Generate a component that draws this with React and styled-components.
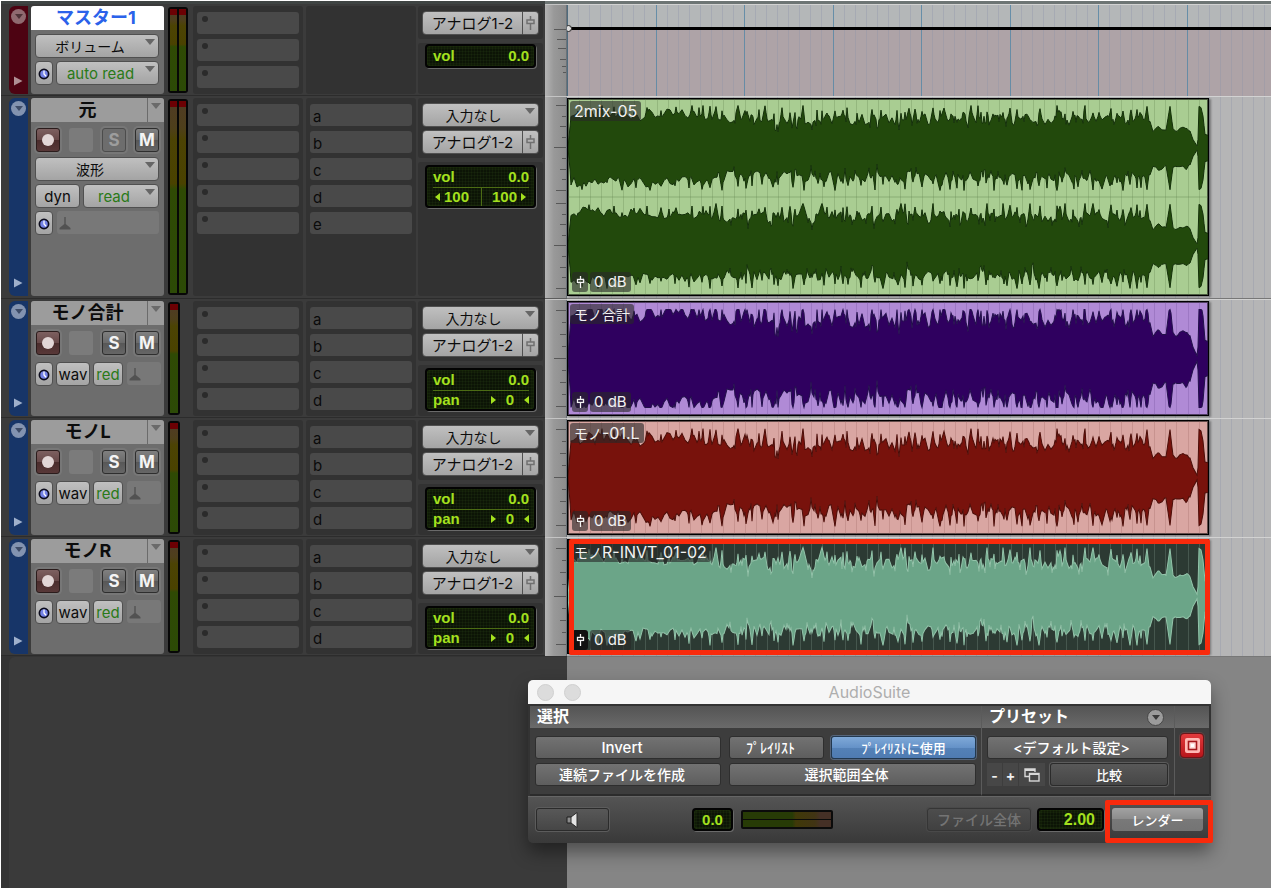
import React from 'react'
import styled, { createGlobalStyle, css } from 'styled-components'

const UI_FONT = 'Inter, "Noto Sans CJK JP", sans-serif'
const LED_FONT = '"Liberation Sans", "Noto Sans CJK JP", sans-serif'

const BAR_WIDTH = 88.5
const CLIP_WIDTH = 640

// peak positions along the clip, upper and lower side of the waveform
const UPPER_PEAKS = [
    10, 21, 34, 46, 54, 66, 79, 93, 101, 108, 124, 131, 135, 142, 148, 154, 170, 178, 184, 191, 197, 206, 214,
    222, 227, 235, 249, 254, 259, 267, 275, 279, 289, 304, 313, 329, 333, 337, 341, 347, 354, 365, 372, 376,
    383, 391, 396, 403, 410, 413, 419, 426, 435, 442, 449, 462, 472, 489, 492, 497, 505, 517, 525, 531, 543,
    549, 555, 563, 569, 572, 579, 602
]

const LOWER_PEAKS = [
    14, 22, 30, 39, 47, 54, 68, 82, 93, 107, 121, 134, 142, 154, 170, 178, 184, 194, 206, 210, 225, 236, 250,
    256, 267, 275, 280, 293, 307, 315, 330, 337, 345, 354, 365, 372, 382, 374, 389, 396, 399, 410, 418, 426,
    436, 439, 449, 454, 462, 471, 479, 489, 494, 506, 510, 517, 525, 534, 543, 549, 555, 562, 569, 573, 579,
    602
]

const TRACKS = [
    {
        id: 'master', name: 'マスター1', kind: 'master', height: 92, tone: 'red', slots: 3, sends: [], meters: 2,
    },
    {
        id: 'src', name: '元', kind: 'stereo', height: 203, tone: 'blue', slots: 5, sends: ['a', 'b', 'c', 'd', 'e'], meters: 2,
        clip: { kana: '', label: '2mix-05', back: '#a9cd92', wave: '#22490c', edge: '#14300a', grid: '#5d7f4a', gain: 1, channels: 2 },
    },
    {
        id: 'sum', name: 'モノ合計', kind: 'mono', height: 119, tone: 'blue', slots: 4, sends: ['a', 'b', 'c', 'd'], meters: 1,
        clip: { kana: 'モノ合計', label: '', back: '#b08ad6', wave: '#2f005f', edge: '#22104a', grid: '#6a4a92', gain: 1.16, channels: 1 },
    },
    {
        id: 'left', name: 'モノL', kind: 'mono', height: 119, tone: 'blue', slots: 4, sends: ['a', 'b', 'c', 'd'], meters: 1,
        clip: { kana: 'モノ', label: '-01.L', back: '#d9a6a2', wave: '#78120c', edge: '#4a0d08', grid: '#96605c', gain: 1, channels: 1 },
    },
    {
        id: 'right', name: 'モノR', kind: 'mono', height: 119, tone: 'blue', slots: 4, sends: ['a', 'b', 'c', 'd'], meters: 1,
        clip: { kana: 'モノ', label: 'R-INVT_01-02', back: '#2c3a33', wave: '#6ba588', edge: '#93c4aa', grid: '#8ba598', gain: 1, channels: 1, marked: true },
    },
]

const hash = (n) => {
    const v = Math.sin(n * 12.9898) * 43758.5453
    return v - Math.floor(v)
}

const noise = (x, seed) => {
    const k = Math.floor(x / 3)
    const t = x / 3 - k
    return hash(k + seed) * (1 - t) + hash(k + 1 + seed) * t
}

const TAIL = [
    [575, 0.66], [582, 0.6], [585, 0.42], [590, 0.5], [598, 0.41], [602, 0.5], [607, 0.4], [612, 0.43], [619, 0.47],
    [622, 0.4], [625, 0.2], [629, 0.05], [630, 0.2], [631, 0.98], [633, 0.95], [635, 0.75], [637, 0.32], [640, 0.3]
]

const bodyLevel = (x, seed) => {
    if (x < 575) {
        const floor = x < 150 ? 0.64 : 0.53
        return Math.min(floor + noise(x, seed) * 0.28, x < 3 ? x * 0.25 : 1)
    }
    const i = TAIL.findIndex((p) => p[0] >= x)
    const [x2, y2] = TAIL[i]
    const [x1, y1] = TAIL[i - 1] || TAIL[i]
    const t = x2 === x1 ? 0 : (x - x1) / (x2 - x1)
    return y1 + (y2 - y1) * t + (noise(x, seed) - 0.5) * (x < 622 ? 0.09 : 0)
}

const level = (x, peaks, seed) => {
    let v = bodyLevel(x, seed)
    peaks.forEach((p) => {
        const low = p < 60 ? 0.76 : 0.8
        const top = p > 575 ? 0.98 : low + hash(p * 3 + seed) * (1.03 - low)
        const slope = p > 575 ? 0.14 : 0.06 + hash(p + seed * 2) * 0.16
        v = Math.max(v, top - Math.abs(x - p) * slope * (x > p ? 1.3 : 1))
    })
    // sharp notches between the transients
    if (x > 140 && x < 575 && hash(x * 7 + seed) > 0.9) v -= 0.16
    return v
}

const wavePath = (mid, amp, gain, seed) => {
    const up = []
    const down = []
    for (let x = 0; x <= CLIP_WIDTH; x += 1) {
        const a = Math.min(1, level(x, UPPER_PEAKS, seed) * gain) * amp
        const b = Math.min(1, level(x, LOWER_PEAKS, seed + 7) * gain) * amp
        up.push(`${x} ${(mid - a).toFixed(1)}`)
        down.unshift(`${x} ${(mid + b).toFixed(1)}`)
    }
    return `M${up.join('L')}L${down.join('L')}Z`
}

const Caret = () => (
    <svg width="10" height="6" viewBox="0 0 10 6" aria-hidden="true"><path d="M0 0h10L5 6z" fill="currentColor" /></svg>
)

const FaderIcon = () => (
    <svg width="9" height="14" viewBox="0 0 9 14" fill="none" stroke="currentColor" strokeWidth="1.5" aria-hidden="true">
        <path d="M4.5 0v4M4.5 8V14" /><rect x="1" y="4" width="7" height="3.500" />
    </svg>
)

const ClockIcon = () => (
    <svg width="12" height="12" viewBox="0 0 12 12" aria-hidden="true">
        <circle cx="6" cy="6" r="4.600" fill="#7482e6" stroke="#0b0b1c" strokeWidth="1.700" />
        <path d="M6 2.500V6l2 2.200" fill="none" stroke="#fff" strokeWidth="1.300" />
    </svg>
)

const StandIcon = () => (
    <svg width="12" height="13" viewBox="0 0 12 13" aria-hidden="true">
        <path d="M5.300 0h1.400v7L11.500 11v1.500H.5V11L5.300 7z" fill="#525252" />
    </svg>
)

const Arrow = ({ left }) => (
    <svg width="5" height="8" viewBox="0 0 5 8" aria-hidden="true">
        <path d={left ? 'M5 0v8L0 4z' : 'M0 0v8l5-4z'} fill="currentColor" />
    </svg>
)

const SpeakerIcon = () => (
    <svg width="14" height="16" viewBox="0 0 14 16" aria-hidden="true">
        <path d="M1 5h5v6H1z" fill="#8d8d8d" stroke="#1c1c1c" />
        <path d="M5 5l6-4.500v15L5 11z" fill="#e4e4e4" stroke="#2a2a2a" />
    </svg>
)

const WindowsIcon = () => (
    <svg width="16" height="14" viewBox="0 0 16 14" fill="none" stroke="#d8d8d8" strokeWidth="1.400" aria-hidden="true">
        <path d="M5 8.500H1V1h10v3" /><path d="M1 2h10M5.500 6H15" strokeWidth="2" /><rect x="5.500" y="5.500" width="9.500" height="7.500" />
    </svg>
)

const TargetIcon = () => (
    <svg width="15" height="15" viewBox="0 0 15 15" aria-hidden="true">
        <rect x="0" y="0" width="15" height="15" rx="2" fill="#ffb9b4" />
        <rect x="3.500" y="3.500" width="8" height="8" fill="#ffd9d6" stroke="#a5181c" strokeWidth="1.600" />
        <rect x="6" y="6" width="3" height="3" fill="#fff" />
    </svg>
)

const Grid = ({ minor, major, strength = 1 }) => {
    const lines = []
    for (let i = 1; i < 240; i += 1) {
        const x = Math.round((i * BAR_WIDTH) / 8) + 0.5
        const isBar = major && i % 8 === 0
        lines.push(<path key={i} d={`M${x} 0V300`} stroke={isBar ? major : minor} strokeOpacity={isBar ? 0.9 : strength} />)
    }
    return <GridSvg aria-hidden="true">{lines}</GridSvg>
}

const Ticks = ({ kind }) => {
    const marks = []
    if (kind === 'master') {
        [[25, 12], [35, 9], [44, 8], [55, 6], [62, 4], [68, 3]].forEach((m) => marks.push(m))
    } else {
        const lengths = [10, 4, 6, 4, 12, 4, 6, 4, 10]
        const starts = kind === 'stereo' ? [9, 107] : [11]
        const pitch = kind === 'stereo' ? 10.6 : 12
        starts.forEach((s) => lengths.forEach((l, i) => marks.push([Math.round(s + i * pitch), l])))
    }
    return (
        <RulerSvg aria-hidden="true">
            {marks.map(([y, l]) => <path key={y} d={`M${21 - l} ${y - 0.5}H21`} stroke="#585858" />)}
        </RulerSvg>
    )
}

const Menu = ({ label, value, green }) => (
    <MenuBox>
        <Select aria-label={label} $green={green} defaultValue={value}>
            <option>{value}</option>
        </Select>
        <Caret />
    </MenuBox>
)

const Wave = ({ clip }) => {
    const h = clip.channels === 2 ? 196 : 112
    return (
        <WaveSvg viewBox={`0 0 ${CLIP_WIDTH} ${h}`} preserveAspectRatio="none" role="img" aria-label={clip.kana + clip.label}>
            {clip.channels === 2 ? (
                <>
                    <path d={wavePath(49, 42.5, 1, 3)} fill={clip.wave} stroke={clip.edge} />
                    <path d={wavePath(147, 42.5, 1, 31)} fill={clip.wave} stroke={clip.edge} />
                    <path d={`M0 98h${CLIP_WIDTH}`} stroke={clip.grid} strokeOpacity=".4" />
                </>
            ) : (
                <path d={wavePath(56, 48.5, clip.gain, clip.marked ? 31 : 3)} fill={clip.wave} stroke={clip.edge} />
            )}
        </WaveSvg>
    )
}

const Clip = ({ clip }) => (
    <ClipBox $back={clip.back}>
        <Grid minor={clip.grid} strength={0.27} />
        <Wave clip={clip} />
        <ClipText>
            <Tag>{clip.kana && <Kana>{clip.kana}</Kana>}{clip.label}</Tag>
            <TagRow>
                <IconTag $solid={clip.marked}><FaderIcon /></IconTag>
                <Tag $small>0 dB</Tag>
            </TagRow>
        </ClipText>
        {clip.marked && <ClipMark />}
    </ClipBox>
)

const Controls = ({ track }) => {
    if (track.kind === 'master') {
        return (
            <Panel>
                <NameRow><Name $active>{track.name}</Name></NameRow>
                <Stack $top={4}>
                    <Menu label="表示" value="ボリューム" />
                    <Line>
                        <Tiny aria-label="タイムベース" $width={18}><ClockIcon /></Tiny>
                        <Menu label="オートメーション" value="auto read" green />
                    </Line>
                </Stack>
            </Panel>
        )
    }
    const stereo = track.kind === 'stereo'
    return (
        <Panel>
            <NameRow>
                <Name>{track.name}</Name>
                <NameCaret aria-label="プレイリスト"><Caret /></NameCaret>
            </NameRow>
            <Keys>
                <RecKey aria-label="録音" />
                <BlankKey />
                <Key disabled={stereo}>S</Key>
                <Key>M</Key>
            </Keys>
            {stereo ? (
                <Stack $top={5}>
                    <Menu label="表示" value="波形" />
                    <Line>
                        <Tiny $width={45}>dyn</Tiny>
                        <Menu label="オートメーション" value="read" green />
                    </Line>
                    <Line>
                        <Tiny aria-label="タイムベース" $width={18}><ClockIcon /></Tiny>
                        <StandBox><StandIcon /></StandBox>
                    </Line>
                </Stack>
            ) : (
                <Stack $top={7} $wide>
                    <Line>
                        <Tiny aria-label="タイムベース" $width={18}><ClockIcon /></Tiny>
                        <Tiny $width={34}>wav</Tiny>
                        <Tiny $width={30} $green>red</Tiny>
                        <StandBox><StandIcon /></StandBox>
                    </Line>
                </Stack>
            )}
        </Panel>
    )
}

const Track = ({ track }) => (
    <Row $height={track.height}>
        <Strip $tone={track.tone}>
            <Round $tone={track.tone} aria-label="トラックオプション"><Caret /></Round>
            <svg width="9" height="10" viewBox="0 0 9 10" aria-hidden="true"><path d="M0 .5v9l8.500-4.500z" fill={track.tone === 'red' ? '#b08f94' : '#9fb0cc'} /></svg>
        </Strip>
        <Controls track={track} />
        <Meter>
            {Array.from({ length: track.meters }, (_, i) => <MeterBar key={i} $thin={track.meters === 2} />)}
        </Meter>
        <Cell>
            {Array.from({ length: track.slots }, (_, i) => <Slot key={i} aria-label={`インサート${i + 1}`}><Dot /></Slot>)}
        </Cell>
        <Cell>
            {track.sends.map((s) => <Slot key={s}>{s}</Slot>)}
        </Cell>
        <IoCell>
            <IoBlock>
                {track.kind !== 'master' && <Menu label="入力" value="入力なし" />}
                <Output>
                    <Select aria-label="出力" $big defaultValue="アナログ1-2"><option>アナログ1-2</option></Select>
                    <FaderKey aria-label="出力フェーダー"><FaderIcon /></FaderKey>
                </Output>
            </IoBlock>
            <IoRest $top={track.kind === 'master' ? 1 : 3}>
                <Led>
                    <LedRow><span>vol</span><span>0.0</span></LedRow>
                    {track.kind === 'stereo' && (
                        <LedRow $ruled $split>
                            <LedPan><Arrow left />100</LedPan>
                            <LedPan $end>100<Arrow /></LedPan>
                        </LedRow>
                    )}
                    {track.kind === 'mono' && (
                        <LedRow $ruled>
                            <span>pan</span>
                            <LedCenter><Arrow />0<Arrow left /></LedCenter>
                        </LedRow>
                    )}
                </Led>
            </IoRest>
        </IoCell>
        <Ruler><Ticks kind={track.kind} /></Ruler>
        <Lane>
            {track.kind === 'master' ? (
                <Volume>
                    <VolumeFill />
                    <Grid minor="#8c93a8" major="#5e8aa6" strength={0.35} />
                    <VolumeLine />
                    <VolumeNode />
                </Volume>
            ) : (
                <>
                    <Grid minor="#8c93a8" strength={0.35} />
                    <Clip clip={track.clip} />
                </>
            )}
        </Lane>
    </Row>
)

const AudioSuite = () => (
    <Suite aria-label="AudioSuite">
        <TitleBar>
            <Lights><Light aria-label="閉じる" /><Light aria-label="しまう" /></Lights>
            <span>AudioSuite</span>
        </TitleBar>
        <SuiteTop>
            <Section>
                <SectionHead>選択</SectionHead>
                <SelectGrid>
                    <SuiteButton $shift $size={15}>Invert</SuiteButton>
                    <SuiteButton $shift>ﾌﾟﾚｲﾘｽﾄ</SuiteButton>
                    <SuiteButton $blue $size={13}>ﾌﾟﾚｲﾘｽﾄに使用</SuiteButton>
                    <SuiteButton $shift>連続ファイルを作成</SuiteButton>
                    <SuiteButton $shift $span>選択範囲全体</SuiteButton>
                </SelectGrid>
            </Section>
            <Section>
                <SectionHead>プリセット<HeadRound aria-label="プリセットメニュー"><Caret /></HeadRound></SectionHead>
                <PresetGrid>
                    <SuiteButton $shift>&lt;デフォルト設定&gt;</SuiteButton>
                    <PresetRow>
                        <FlatKey>-</FlatKey>
                        <FlatKey>+</FlatKey>
                        <FlatKey $wide aria-label="設定"><WindowsIcon /></FlatKey>
                        <SuiteButton $inset $size={13}>比較</SuiteButton>
                    </PresetRow>
                </PresetGrid>
            </Section>
            <Section>
                <SectionHead />
                <TargetKey aria-label="ターゲット"><TargetIcon /></TargetKey>
            </Section>
        </SuiteTop>
        <SuiteFoot>
            <SuiteButton $inset $width={73} aria-label="プレビュー"><SpeakerIcon /></SuiteButton>
            <FootLed $width={41} $gap={83}>0.0</FootLed>
            <FootMeter><i /><i /></FootMeter>
            <Push />
            <SuiteButton $inset $width={104} disabled>ファイル全体</SuiteButton>
            <FootLed $width={67} $gap={6} $big>2.00</FootLed>
            <RenderWrap>
                <SuiteButton $light $size={13} $width={91}>レンダー</SuiteButton>
                <RenderMark />
            </RenderWrap>
        </SuiteFoot>
    </Suite>
)

const App = () => (
    <Page>
        <GlobalStyle />
        <TopEdge><TopDark /><TopLight /></TopEdge>
        {TRACKS.map((t) => <Track key={t.id} track={t} />)}
        <Below><BelowList /><BelowEdit /></Below>
        <AudioSuite />
    </Page>
)

export default App

const GlobalStyle = createGlobalStyle`
* { box-sizing: border-box; }
body { margin: 0; background: #fff; font-family: ${UI_FONT}; }
button, select { font-family: inherit; margin: 0; padding: 0; border: 0; cursor: pointer; }
svg { display: block; flex: none; }
`

const Page = styled.main`
position: relative;
display: flex;
flex-direction: column;
min-height: 100vh;
padding: 1px;
overflow: hidden;
`

const TopEdge = styled.div`
display: flex;
height: 3px;
`

const TopDark = styled.div`
width: 544px;
background: #3f4443;
`

const TopLight = styled.div`
flex: 1;
background: #6d7574;
`

const Row = styled.section`
display: grid;
grid-template-columns: 22px 133px 29px 113px 112px 127px 22px 1fr;
height: ${(p) => p.$height}px;
padding-left: 8px;
background: #3b3b3b;
box-shadow: inset 0 -1px #2c2c2c;
`

const Strip = styled.div`
display: flex;
flex-direction: column;
align-items: center;
justify-content: space-between;
width: 19px;
margin: 2px 0 3px;
padding: 3px 0 8px;
border-radius: 6px 0 0 6px;
background: ${(p) => (p.$tone === 'red' ? '#4d0312' : '#173568')};
`

const Round = styled.button`
display: flex;
align-items: center;
justify-content: center;
width: 15px;
height: 15px;
border-radius: 50%;
background: ${(p) => (p.$tone === 'red' ? '#8f6a70' : '#8393b0')};
color: ${(p) => (p.$tone === 'red' ? '#4d3338' : '#3e4c68')};
svg { width: 8px; height: 5px; }
`

const Panel = styled.div`
margin: 2px 0 3px;
border-radius: 3px;
background: #6d6d6d;
overflow: hidden;
`

const NameRow = styled.div`
display: flex;
height: 24px;
`

const Name = styled.button`
flex: 1;
padding-right: 3px;
background: ${(p) => (p.$active ? '#fff' : '#9c9c9c')};
color: ${(p) => (p.$active ? '#2b62ea' : '#0c0c0c')};
font-size: 18px;
font-weight: 700;
line-height: 24px;
white-space: nowrap;
`

const NameCaret = styled.button`
display: flex;
justify-content: center;
width: 17px;
padding-top: 5px;
border-left: 1px solid #6b6b6b;
background: #9c9c9c;
color: #6a6a6a;
`

const Keys = styled.div`
display: flex;
gap: 9px;
padding: 6px 5px 0;
`

const keyBase = css`
width: 24px;
height: 24px;
border-radius: 3px;
`

const Key = styled.button`
${keyBase}
border: 1px solid #2e2e2e;
background: linear-gradient(#808080, #6a6a6a 50%, #575757 50%, #666);
box-shadow: 0 0 0 2px rgba(255, 255, 255, .07);
color: #f4f4f4;
font-size: 17px;
font-weight: 700;
line-height: 22px;
&:disabled {
    border-color: #4c4c4c;
    background: #6d6d6d;
    color: #9d9d9d;
}
`

const RecKey = styled.button`
${keyBase}
display: flex;
align-items: center;
justify-content: center;
border: 1px solid #2b1c1c;
background: linear-gradient(#7d6060, #674848 50%, #4a2c2c 50%, #583838);
box-shadow: 0 0 0 2px rgba(255, 255, 255, .07);
&::before {
    content: '';
    width: 12px;
    height: 12px;
    border-radius: 50%;
    background: #e2d6d6;
}
`

const BlankKey = styled.div`
${keyBase}
background: #7b7b7b;
`

const Stack = styled.div`
display: flex;
flex-direction: column;
gap: 3px;
padding: ${(p) => p.$top}px ${(p) => (p.$wide ? 3 : 5)}px 0 4px;
`

const Line = styled.div`
display: flex;
gap: 3px;
`

const MenuBox = styled.div`
position: relative;
display: flex;
flex: 1;
> svg {
    position: absolute;
    top: 5px;
    right: 4px;
    color: #666;
    pointer-events: none;
}
`

const raised = css`
border: 1px solid #505050;
border-radius: 4px;
background: linear-gradient(#c0c0c0, #a4a4a4);
`

const Select = styled.select`
${raised}
appearance: none;
width: 100%;
height: 24px;
padding: 2px 14px 0 0;
color: ${(p) => (p.$green ? '#2a7a18' : '#0c0c0c')};
font-size: ${(p) => (p.$green || p.$big ? 15 : 14)}px;
line-height: 20px;
text-align: center;
text-align-last: center;
`

const Tiny = styled.button`
${raised}
display: flex;
align-items: center;
justify-content: center;
flex: none;
width: ${(p) => p.$width}px;
height: 24px;
padding-top: 1px;
color: ${(p) => (p.$green ? '#2a7a18' : '#0c0c0c')};
font-size: 15px;
line-height: 20px;
`

const StandBox = styled.div`
flex: 1;
height: 23px;
margin-left: 1px;
padding: 6px 0 0 2px;
border-radius: 3px;
background: #787878;
`

const Meter = styled.div`
display: flex;
align-self: stretch;
justify-self: start;
gap: 2px;
margin: 3px 0 4px 4px;
padding: 2px;
border-radius: 3px;
background: #070707;
`

const MeterBar = styled.div`
width: ${(p) => (p.$thin ? 7 : 8)}px;
background: linear-gradient(#6c0003 6px, #4f3c22 6px, #4e3f1b 14%, #4c4304 20%, #4a4200 43%, #2f4a04 46%, #2c4a06);
`

const Cell = styled.div`
display: flex;
flex-direction: column;
gap: 5px;
width: 110px;
margin: 2px 0 3px;
padding: 6px 4px;
border-radius: 3px;
background: #323232;
`

const Slot = styled.button`
display: flex;
height: 22px;
padding: 2px 3px 0;
border-radius: 3px;
background: #494949;
color: #0b0b0b;
font-size: 15px;
line-height: 22px;
text-align: left;
`

const Dot = styled.span`
width: 6px;
height: 6px;
margin: 2px;
border-radius: 50%;
background: #2b2b2b;
`

const IoCell = styled.div`
display: flex;
flex-direction: column;
gap: 4px;
width: 125px;
margin: 2px 0 3px;
`

const IoBlock = styled.div`
display: flex;
flex-direction: column;
gap: 3px;
padding: 5px 4px 4px;
border-radius: 3px;
background: #323232;
`

const IoRest = styled.div`
flex: 1;
padding: ${(p) => p.$top}px 7px 0;
border-radius: 3px;
background: #323232;
`

const Output = styled.div`
display: flex;
select {
    padding-right: 0;
    border-radius: 4px 0 0 4px;
}
`

const FaderKey = styled.button`
${raised}
display: flex;
align-items: center;
justify-content: center;
flex: none;
width: 16px;
height: 24px;
border-left: 0;
border-radius: 0 4px 4px 0;
color: #707070;
`

const led = css`
border: 2px solid #030303;
border-radius: 4px;
background: repeating-linear-gradient(90deg, transparent 0 2px, rgba(70, 110, 30, .1) 2px 3px),
    repeating-linear-gradient(#0c1406 0 2px, #121d0a 2px 3px);
box-shadow: 1px 1px 0 #6a6a6a, inset 0 0 3px #2c4612;
color: #a3e01e;
font-family: ${LED_FONT};
font-weight: 700;
`

const Led = styled.div`
${led}
padding: 0 5px 0 6px;
font-size: 15px;
line-height: 20px;
`

const LedRow = styled.div`
display: flex;
justify-content: space-between;
height: ${(p) => (p.$ruled ? 19 : 20)}px;
line-height: ${(p) => (p.$ruled ? 18 : 20)}px;
border-top: ${(p) => (p.$ruled ? '1px solid #4c6c14' : '0')};
background: ${(p) => (p.$split ? 'linear-gradient(#4c6c14, #4c6c14) center / 1px 100% no-repeat' : 'none')};
`

const LedPan = styled.span`
display: flex;
align-items: center;
gap: 4px;
padding: ${(p) => (p.$end ? '0 3px 0 0' : '0 0 0 2px')};
`

const LedCenter = styled.span`
display: flex;
align-items: center;
gap: 10px;
`

const Ruler = styled.div`
border-top: 1px solid #c4c4c4;
border-bottom: 1px solid #5c5c5c;
background: linear-gradient(90deg, #b4b4b4, #999 40%, #8c8c8c);
box-shadow: inset -1px 0 #6b7278;
overflow: hidden;
`

const RulerSvg = styled.svg`
width: 22px;
height: 100%;
`

const Lane = styled.div`
position: relative;
border-top: 1px solid #d2d2d2;
border-bottom: 1px solid #777;
background: #b5b5b6;
overflow: hidden;
`

const GridSvg = styled.svg`
position: absolute;
inset: 0;
width: 100%;
height: 100%;
`

const ClipBox = styled.div`
position: relative;
width: ${CLIP_WIDTH + 2}px;
height: calc(100% - 3px);
margin-top: 1px;
border: 1px solid #000;
outline: 1px solid rgba(0, 0, 0, .55);
outline-offset: -2px;
background: ${(p) => p.$back};
box-shadow: 2px 1px 2px rgba(0, 0, 0, .35);
`

const WaveSvg = styled.svg`
position: relative;
width: 100%;
height: 100%;
`

const ClipText = styled.div`
position: absolute;
inset: 0;
display: flex;
flex-direction: column;
align-items: flex-start;
justify-content: space-between;
padding: 2px 2px 3px;
`

const Tag = styled.span`
height: 20px;
padding: 0 4px;
border-radius: 3px;
background: rgba(40, 40, 40, .62);
color: #f2f2f2;
font-size: ${(p) => (p.$small ? 15 : 16)}px;
line-height: 20px;
white-space: nowrap;
`

const Kana = styled.span`
font-size: 14px;
`

const TagRow = styled.div`
display: flex;
gap: 2px;
padding-left: 2px;
`

const IconTag = styled.span`
display: flex;
align-items: center;
justify-content: center;
width: 16px;
border-radius: 3px;
background: ${(p) => (p.$solid ? '#111' : 'rgba(40, 40, 40, .62)')};
color: #f2f2f2;
svg { height: 12px; }
`

const ClipMark = styled.div`
position: absolute;
inset: -1px -2px -2px 1px;
border: 5px solid #f92a0c;
border-radius: 2px;
`

const Volume = styled.div`
display: flex;
flex-direction: column;
height: 100%;
padding-top: 22px;
border-left: 1px solid #4f6b7d;
background: #b4b7b8;
`

const VolumeLine = styled.div`
position: absolute;
top: 22px;
left: 1px;
right: 0;
height: 3px;
background: #000;
`

const VolumeFill = styled.div`
flex: 1;
background: #aea3a7;
`

const VolumeNode = styled.div`
position: absolute;
top: 20px;
left: -2px;
width: 7px;
height: 7px;
border: 1px solid #222;
border-radius: 50%;
background: #ddd;
`

const Below = styled.div`
display: flex;
flex: 1;
background: #343434;
`

const BelowList = styled.div`
width: 558px;
margin: 1px 0 0 8px;
border-radius: 6px 0 0 0;
background: #3a3a3a;
`

const BelowEdit = styled.div`
flex: 1;
background: #858585;
`

const Suite = styled.section`
position: absolute;
top: 680px;
left: 528px;
width: 683px;
border-radius: 5px;
background: #333;
box-shadow: 0 9px 18px rgba(0, 0, 0, .42);
`

const TitleBar = styled.header`
display: grid;
grid-template-columns: 1fr auto 1fr;
align-items: center;
height: 24px;
padding: 0 9px;
border-radius: 5px 5px 0 0;
background: #f6f6f6;
color: #aeaeae;
font-size: 16px;
line-height: 24px;
`

const Lights = styled.div`
display: flex;
gap: 10px;
`

const Light = styled.button`
width: 17px;
height: 17px;
border: 1px solid #d0d0d0;
border-radius: 50%;
background: #dcdcdc;
`

const SuiteTop = styled.div`
display: grid;
grid-template-columns: 1fr 193px 35px;
margin: 0 2px;
padding-top: 2px;
background: #333;
`

const Section = styled.div`
background: #3d3d3d;
border-bottom: 2px solid #2c2c2c;
& + & {
    border-left: 1px solid #5b5b5b;
}
`

const SectionHead = styled.div`
display: flex;
justify-content: space-between;
height: 22px;
padding: 0 10px 0 7px;
background: linear-gradient(#545454, #6a6a6a);
color: #fff;
font-size: 16px;
font-weight: 700;
line-height: 20px;
`

const HeadRound = styled.button`
display: flex;
align-items: center;
justify-content: center;
width: 17px;
height: 17px;
margin-top: 3px;
border: 1px solid #474747;
border-radius: 50%;
background: #9b9b9b;
color: #3a3a3a;
svg { width: 8px; height: 5px; }
`

const SelectGrid = styled.div`
display: grid;
grid-template-columns: 186px 8px 95px 7px 1fr;
grid-auto-rows: 23px;
row-gap: 4px;
padding: 8px 5px 8px;
> :nth-child(2) { grid-column: 3; }
> :nth-child(3) { grid-column: 5; }
> :nth-child(4) { grid-column: 1; }
`

const SuiteButton = styled.button`
display: flex;
align-items: center;
justify-content: center;
flex: ${(p) => (p.$width ? 'none' : 1)};
${(p) => p.$width && css`width: ${p.$width}px;`}
${(p) => p.$span && css`grid-column: 3 / 6;`}
height: 23px;
padding: ${(p) => (p.$shift ? '1px 12px 0 0' : '1px 0 0')};
border: 1px solid #2e2e2e;
border-radius: 3px;
background: linear-gradient(#727272, #5e5e5e);
color: #fff;
font-size: ${(p) => p.$size || 14}px;
font-weight: 500;
line-height: 20px;
white-space: nowrap;
${(p) => p.$inset && css`
    border-color: #2b2b2b;
    background: linear-gradient(#585858, #464646);
    box-shadow: 0 0 0 1px #5c5c5c;
`}
${(p) => p.$blue && css`
    border-color: #22384f;
    background: linear-gradient(#7fa9d8, #6592c8 50%, #5481b7 50%, #4f7bb2);
    box-shadow: 0 0 0 1px #56657a;
`}
${(p) => p.$light && css`
    border: 0;
    background: linear-gradient(#a2a2a2, #8b8b8b 50%, #797979 50%, #747474);
`}
&:disabled {
    border-color: #353535;
    background: none;
    box-shadow: 0 0 0 1px #494949;
    color: #747474;
}
`

const PresetGrid = styled.div`
display: flex;
flex-direction: column;
gap: 4px;
padding: 8px 6px 8px 5px;
> button { flex: none; }
`

const PresetRow = styled.div`
display: flex;
gap: 1px;
> :last-child { margin-left: 4px; }
`

const FlatKey = styled.button`
display: flex;
align-items: center;
justify-content: center;
width: ${(p) => (p.$wide ? 26 : 15)}px;
height: 23px;
padding-top: ${(p) => (p.$wide ? 0 : 2)}px;
background: #474747;
color: #f0f0f0;
font-size: 14px;
font-weight: 700;
`

const TargetKey = styled.button`
display: flex;
align-items: center;
justify-content: center;
width: 24px;
height: 25px;
margin: 5px auto 0;
border: 1px solid #6d1518;
border-radius: 4px;
background: linear-gradient(#e23a3c, #b8161b);
box-shadow: 0 0 0 1px #5f4444;
`

const SuiteFoot = styled.footer`
display: flex;
align-items: flex-start;
height: 47px;
padding: 11px 8px 0;
border-top: 1px solid #666;
border-radius: 0 0 5px 5px;
background: linear-gradient(#545454, #393939);
`

const FootLed = styled.output`
${led}
width: ${(p) => p.$width}px;
height: 23px;
margin-left: ${(p) => p.$gap}px;
padding-right: ${(p) => (p.$big ? 7 : 0)}px;
font-size: ${(p) => (p.$big ? 16 : 15)}px;
line-height: 19px;
text-align: ${(p) => (p.$big ? 'right' : 'center')};
`

const FootMeter = styled.div`
display: flex;
flex-direction: column;
gap: 1px;
width: 92px;
height: 19px;
margin: 2px 0 0 8px;
padding: 2px;
border-radius: 2px;
background: #0b0b0b;
i {
    flex: 1;
    background: linear-gradient(90deg, #273b06 56%, #403908 60%, #413414 82%, #453026 88%);
}
`

const Push = styled.div`
flex: 1;
`

const RenderWrap = styled.div`
position: relative;
margin-left: 8px;
`

const RenderMark = styled.div`
position: absolute;
inset: -8px -10px -12px -7px;
border: 5px solid #f92a0c;
border-radius: 2px;
pointer-events: none;
`
